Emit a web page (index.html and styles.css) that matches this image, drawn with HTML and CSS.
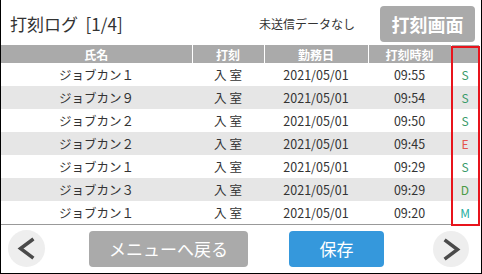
FILE: index.html
```html
<!DOCTYPE html>
<html lang="ja">
<head>
    <meta charset="UTF-8">
    <title>打刻ログ</title>
    <link rel="stylesheet" href="styles.css">
</head>
<body>
    <div class="screen">
        <!-- top bar -->
        <div class="top-bar">
            <h1 class="title">打刻ログ&nbsp; [1/4]</h1>
            <span class="status">未送信データなし</span>
            <button class="btn btn-grey btn-stamp">打刻画面</button>
        </div>

        <table class="log-table">
            <thead>
                <tr>
                    <th class="col-name">氏名</th>
                    <th class="col-type">打刻</th>
                    <th class="col-date">勤務日</th>
                    <th class="col-time">打刻時刻</th>
                    <th class="col-flag"></th>
                </tr>
            </thead>
            <tbody>
                <tr>
                    <td>ジョブカン１</td><td class="type">入室</td><td>2021/05/01</td><td>09:55</td><td class="flag flag-s">S</td>
                </tr>
                <tr>
                    <td>ジョブカン９</td><td class="type">入室</td><td>2021/05/01</td><td>09:54</td><td class="flag flag-s">S</td>
                </tr>
                <tr>
                    <td>ジョブカン２</td><td class="type">入室</td><td>2021/05/01</td><td>09:50</td><td class="flag flag-s">S</td>
                </tr>
                <tr>
                    <td>ジョブカン２</td><td class="type">入室</td><td>2021/05/01</td><td>09:45</td><td class="flag flag-e">E</td>
                </tr>
                <tr>
                    <td>ジョブカン１</td><td class="type">入室</td><td>2021/05/01</td><td>09:29</td><td class="flag flag-s">S</td>
                </tr>
                <tr>
                    <td>ジョブカン３</td><td class="type">入室</td><td>2021/05/01</td><td>09:29</td><td class="flag flag-d">D</td>
                </tr>
                <tr>
                    <td>ジョブカン１</td><td class="type">入室</td><td>2021/05/01</td><td>09:20</td><td class="flag flag-m">M</td>
                </tr>
            </tbody>
        </table>

        <!-- highlight around the flag column -->
        <div class="flag-box"></div>

        <div class="footer">
            <button class="circle-btn prev">
                <svg width="37" height="37" viewBox="0 0 37 37">
                    <polyline points="24,10 12.5,18.5 24,27" fill="none" stroke="#4a4a4a" stroke-width="3.5" stroke-linecap="square"/>
                </svg>
            </button>
            <button class="btn btn-grey btn-menu">メニューへ戻る</button>
            <button class="btn btn-blue btn-save">保存</button>
            <button class="circle-btn next">
                <svg width="36" height="36" viewBox="0 0 36 36">
                    <polyline points="13,10 24.5,18.5 13,27" fill="none" stroke="#4a4a4a" stroke-width="3.5" stroke-linecap="square"/>
                </svg>
            </button>
        </div>
    </div>
</body>
</html>
```
FILE: styles.css
```css
* {
    margin: 0;
    padding: 0;
    box-sizing: border-box;
}

body {
    background: #fff;
    font-family: "Noto Sans CJK JP", "Noto Sans", sans-serif;
    color: #333;
}

.screen {
    position: relative;
    width: 482px;
    height: 274px;
    border: 1px solid #000;
    border-top: none;
    overflow: hidden;
}

/* top bar */
.top-bar {
    height: 45px;
    padding-top: 6px;
    display: flex;
    align-items: flex-start;
}

.title {
    flex: 1;
    height: 36px;
    line-height: 36px;
    padding-left: 9px;
    font-size: 17px;
    font-weight: normal;
}

.status {
    height: 36px;
    line-height: 36px;
    font-size: 12px;
    margin-right: 25px;
}

.btn {
    border: none;
    border-radius: 4px;
    color: #fff;
    font-family: inherit;
    cursor: pointer;
}

.btn-grey {
    background-color: #aaa;
}

.btn-blue {
    background-color: #3598dc;
}

.btn-stamp {
    width: 95px;
    height: 36px;
    margin-right: 6px;
    font-size: 18px;
    font-weight: bold;
}

/* table */
.log-table {
    width: 478px;
    border-collapse: collapse;
    table-layout: fixed;
    font-size: 12.5px;
}

.log-table th {
    height: 18px;
    background-color: #aaa;
    color: #fff;
    font-size: 12px;
    font-weight: bold;
    border-left: 1px solid #fff;
    padding: 0;
}

.log-table th:first-child {
    border-left: none;
}

.col-name { width: 191px; }
.col-type { width: 72px; }
.col-date { width: 104px; }
.col-time { width: 83px; }
.col-flag { width: 28px; }

.log-table td {
    height: 23px;
    padding: 0;
    text-align: center;
}

.log-table tbody tr:nth-child(even) {
    background-color: #e6e6e6;
}

.log-table tbody tr:last-child td {
    border-bottom: 1px solid #999;
}

.type {
    letter-spacing: 3px;
    text-indent: 3px;
}

.flag { font-size: 12px; }
.flag-s { color: #3a9a6a; }
.flag-e { color: #e5544e; }
.flag-d { color: #4b9a45; }
.flag-m { color: #1fae9e; }

.flag-box {
    position: absolute;
    left: 450px;
    top: 46px;
    width: 29px;
    height: 180px;
    border: 2px solid #e8141c;
}

/* footer */
.footer {
    height: 48px;
    display: flex;
    align-items: center;
    padding-left: 7px;
}

.circle-btn {
    border: none;
    border-radius: 50%;
    background-color: #eee;
    display: flex;
    align-items: center;
    justify-content: center;
    cursor: pointer;
}

.prev {
    width: 37px;
    height: 37px;
    margin-right: 44px;
}

.next {
    width: 36px;
    height: 36px;
    margin-left: 49px;
}

.btn-menu {
    width: 159px;
    height: 36px;
    margin-right: 41px;
    font-size: 17px;
}

.btn-save {
    width: 95px;
    height: 36px;
    font-size: 17px;
}
```
